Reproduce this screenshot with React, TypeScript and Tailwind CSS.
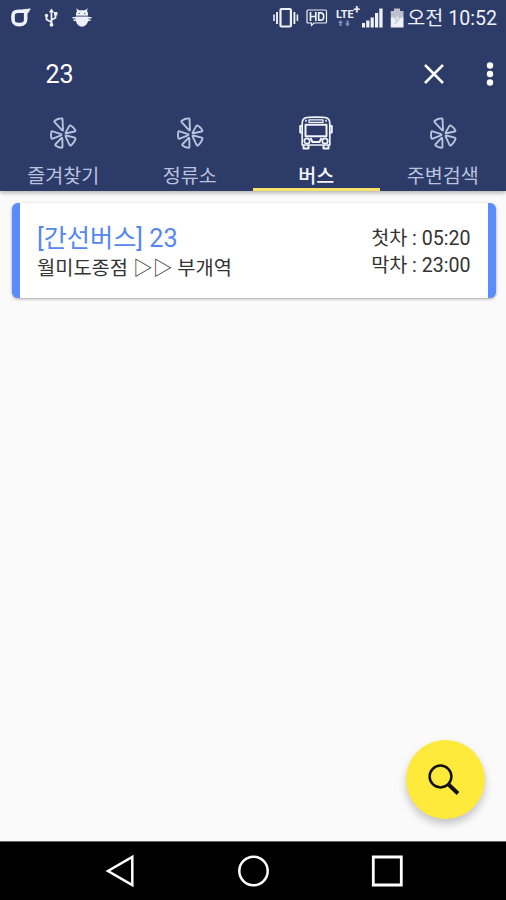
import type { ReactNode } from "react";

const FONT = "font-[Roboto,'Noto_Sans_CJK_KR',sans-serif]";

function StatusBar() {
  return (
    <div className="flex h-9 items-center text-[#eef1fa]">
      <svg className="ml-[10px] h-5 w-[21px]" viewBox="0 0 21 20" fill="none" stroke="currentColor">
        <path d="M17 3.200H8.500C4.500 3.200 3 4.500 3 8v2.800c0 4.200 1.300 5.800 6.300 5.800s6.400-1.600 6.400-5.800V4" strokeWidth="3.600" />
        <path d="M13 1.700L20.300.800l-2 3.700-2 1z" strokeWidth=".6" fill="currentColor" />
      </svg>
      <svg className="ml-[13px] h-5 w-[14px]" viewBox="0 0 14 20" fill="none" stroke="currentColor" strokeWidth="1.800">
        <path d="M7.500 2v15M7.500 14.200L2.500 11.500V7.500M7.500 12l4-2.200V5.500" />
        <path d="M5.300 4.200L7.500.8l2.200 3.400z" fill="currentColor" strokeWidth=".5" />
        <circle cx="7.500" cy="16.800" r="1.900" fill="currentColor" stroke="none" />
        <circle cx="2.500" cy="7.500" r="1.700" fill="currentColor" stroke="none" />
        <path d="M10 4h3.400v3.400H10z" fill="currentColor" stroke="none" />
      </svg>
      <svg className="ml-[14px] h-5 w-5" viewBox="0 0 20 20" fill="currentColor">
        <path d="M4 7.800C3.800 5.500 4.400 4 5 3L4.300.2 7 2.200h6L15.600.2 15 3c.8 1.100 1.300 2.700 1 4.800zM.5 8.900h19v1.600H.5zM1.500 11.600h17v1.500h-2.300c-1.300 3.700-3.400 5.600-6.200 5.600s-4.900-1.900-6.200-5.600H1.500z" />
        <path d="M3.500 8h13v5h-13z" />
        <path d="M3 8.300h14" stroke="#2d3b69" strokeWidth=".7" />
        <circle cx="7.200" cy="5.300" r=".6" fill="#2d3b69" />
        <circle cx="12.800" cy="5.300" r=".6" fill="#2d3b69" />
      </svg>

      <svg className="ml-auto h-[22px] w-[27px]" viewBox="0 0 27 22" fill="none" stroke="currentColor">
        <rect x="8.500" y="2" width="10.400" height="17.500" rx="1" strokeWidth="2.200" />
        <path d="M5 5v12M22.400 5v12" strokeWidth="1.900" />
        <path d="M2 7.500v6.500M25.400 7.500v6.500" strokeWidth="1.600" />
      </svg>
      <svg className="ml-[7px] h-[22px] w-[22px]" viewBox="0 0 22 22" fill="none" stroke="currentColor">
        <path d="M2 3h17.500q1 0 1 1v11q0 1-1 1H8l-2.500 2.400V16H2q-1 0-1-1V4q0-1 1-1z" strokeWidth="1.200" />
        <path d="M4.500 5v9M9.800 5v9M4.500 9.500h5.300M12.700 5.800h2q3 0 3 3.700t-3 3.700h-2z" strokeWidth="1.700" />
      </svg>
      <div className="relative ml-[8px] h-[22px] w-[26px]">
        <span className="absolute top-[1.5px] left-0 font-[Roboto,sans-serif] text-[11px] leading-[11px] font-bold">LTE</span>
        <span className="absolute -top-[3px] left-[17.5px] font-[Roboto,sans-serif] text-[12px] leading-[13px] font-bold">+</span>
        <svg className="absolute top-[13px] left-[2px] h-[7px] w-[12px]" viewBox="0 0 12 7" fill="#8390b8">
          <path d="M2.500 0L5 3H3.500v3h-2V3H0zM9.500 6.500L7 3.500h1.500V.5h2v3H12z" />
        </svg>
      </div>
      <svg className="h-[22px] w-[21px]" viewBox="0 0 21 22" fill="currentColor">
        <path d="M0 16h3v4.500H0zM4.200 13.500h3.200v7H4.200zM8.600 10.500h3.200v10H8.600zM13 6h3.200v14.500H13zM17.300 1.500h3.300v19h-3.300z" />
      </svg>
      <svg className="ml-[7px] h-[22px] w-[15px]" viewBox="0 0 15 22" fill="currentColor">
        <path d="M4 1.500h6V4h3.500v7H.800V4H4z" fill="#bcc1d0" />
        <path d="M.800 10.500h12.700v10H.800z" />
        <path d="M10.500 5.500L4 12h3l-2 5 6-6.500H8z" fill="#e4e6ec" stroke="#a5aab9" strokeWidth=".5" />
      </svg>
      <span className="mr-[9px] w-[92px] pt-[2px] text-right text-[19.6px] leading-9 whitespace-nowrap">오전 10:52</span>
    </div>
  );
}

function PetalIcon() {
  return (
    <svg className="h-9 w-9" viewBox="0 0 36 36" fill="none" stroke="currentColor" strokeWidth="1.900" strokeLinejoin="round">
      <path d="M9.700 6.700Q12.700 4.500 16.300 4.300Q17.500 4.200 17.500 5.400L18 15.700Q18 17.200 17 16.200L9.600 8.200Q9 7.300 9.700 6.700z" />
      <path d="M6.300 17.900Q6.700 17 7.700 17.400L16 20.200Q17 20.700 16 21.300L7.700 24.700Q6.600 25.100 6.300 24Q5.600 21 6.300 17.900z" />
      <path d="M16.300 24.200Q17.300 23.200 17.300 24.600L17.500 32.600Q17.500 33.900 16.300 33.700Q13.100 33.400 10.800 31.700Q9.800 31 10.700 30z" />
      <path d="M21.300 19.300Q20.200 19.500 20.700 18.400L24.400 11.900Q25.100 10.900 26.100 11.800Q29.100 13.700 30.300 16.200Q30.800 17.200 29.600 17.500z" />
      <path d="M21.300 21.500Q20.200 21.200 20.600 22.300L24.500 30.800Q25.100 32.100 26.200 31.200Q29.200 28.700 30.500 25.200Q30.800 24 29.700 23.700z" />
    </svg>
  );
}

function BusIcon() {
  return (
    <svg className="h-9 w-9" viewBox="0 0 36 36" fill="none" stroke="currentColor" strokeWidth="1.700" strokeLinejoin="round">
      <path d="M4.200 9q0-5.500 6-5.700 7.800-.5 15.600 0 6 .2 6 5.700v22H4.200z" />
      <path d="M4 12H2.200v6.500H4M32 12h1.800v6.500H32" strokeWidth="1.900" />
      <path d="M11 5.800h14v2.500H11z" strokeWidth="1.300" />
      <path d="M7.200 6.700h1.600M27.200 6.700h1.600" strokeWidth="2" />
      <path d="M7.500 10.800h21v11.500h-21z" strokeWidth="2" />
      <circle cx="9" cy="27" r="2.700" />
      <circle cx="27" cy="27" r="2.700" />
      <path d="M12.500 24l2 4h7l2-4M5.500 31v3.400h5V31M25.500 31v3.400h5V31" strokeWidth="2" />
    </svg>
  );
}

function Tab({ label, icon, active }: { label: string; icon: ReactNode; active?: boolean }) {
  return (
    <button className={`flex flex-1 flex-col items-center border-b-[3px] ${active ? "border-[#f8e36a] text-[#f2f4fb]" : "border-transparent text-[#b9c2de]"}`}>
      {icon}
      <span className={`mt-[13px] h-[25px] text-[19.6px] leading-7 ${active ? "font-medium" : ""}`}>{label}</span>
    </button>
  );
}

export default function App() {
  return (
    <div className={`flex h-[900px] w-[506px] flex-col overflow-hidden bg-[#fafafa] ${FONT}`}>
      <header className="h-[191px] shrink-0 bg-[#2d3b69] shadow-[0_2px_4px_rgba(0,0,0,0.28)]">
        <StatusBar />
        <div className="flex h-[78px] items-center text-white">
          <span className="ml-[45.5px] text-[25px] leading-8">23</span>
          <svg className="mb-[3px] ml-auto h-5 w-5" viewBox="0 0 20 20" stroke="currentColor" strokeWidth="2.500">
            <path d="M1 1l18 18M19 1L1 19" />
          </svg>
          <svg className="mr-[12px] mb-[3px] ml-[42px] h-6 w-2" viewBox="0 0 8 24" fill="currentColor">
            <circle cx="4" cy="3.500" r="3.200" />
            <circle cx="4" cy="12" r="3.200" />
            <circle cx="4" cy="20.500" r="3.200" />
          </svg>
        </div>
        <nav className="flex h-[77px]">
          <Tab label="즐겨찾기" icon={<PetalIcon />} />
          <Tab label="정류소" icon={<PetalIcon />} />
          <Tab label="버스" icon={<BusIcon />} active />
          <Tab label="주변검색" icon={<PetalIcon />} />
        </nav>
      </header>

      <main className="flex flex-1 flex-col pt-3 pr-[10.5px] pl-[11.5px]">
        <article className="flex h-[95px] justify-between rounded-[6px] border-x-[8px] border-[#5a8cfb] bg-white pr-[17px] pl-[17.5px] shadow-[0_1px_3px_rgba(0,0,0,0.35)]">
          <div className="pt-[20px]">
            <h2 className="text-[25.2px] leading-8 whitespace-nowrap text-[#5687ef]">[간선버스] 23</h2>
            <p className="text-[19.8px] leading-[28px] whitespace-nowrap text-[#333]">월미도종점 ▷▷ 부개역</p>
          </div>
          <div className="pt-[22px] text-right text-[19.6px] leading-[27px] whitespace-nowrap text-[#333]">
            <p>첫차 : 05:20</p>
            <p>막차 : 23:00</p>
          </div>
        </article>
        <button className="mt-auto mr-[11px] mb-[22px] flex h-[79px] w-[79px] items-center justify-center self-end rounded-full bg-[#ffe93b] shadow-[0_5px_9px_rgba(0,0,0,0.22)]">
          <svg className="mr-[2px] h-8 w-8" viewBox="0 0 32 32" fill="none" stroke="#111">
            <circle cx="12.500" cy="12.500" r="10.900" strokeWidth="2.500" />
            <path d="M20 20l10 9.500" strokeWidth="3.800" />
          </svg>
        </button>
      </main>

      <footer className="h-[59px] shrink-0 border-t border-[#666] bg-black">
        <div className="flex h-full items-center pl-[105px] text-white">
          <svg className="h-[34px] w-[30px]" viewBox="0 0 30 34" fill="none" stroke="currentColor" strokeWidth="2.500">
            <path d="M27.300 3v28L3 17z" />
          </svg>
          <svg className="ml-[102px] h-[34px] w-[34px]" viewBox="0 0 34 34" fill="none" stroke="currentColor" strokeWidth="2.500">
            <circle cx="16.500" cy="17" r="14.200" />
          </svg>
          <svg className="ml-[100px] h-[34px] w-[34px]" viewBox="0 0 34 34" fill="none" stroke="currentColor" strokeWidth="2.800">
            <path d="M2.300 3h28v28h-28z" />
          </svg>
        </div>
      </footer>
    </div>
  );
}
